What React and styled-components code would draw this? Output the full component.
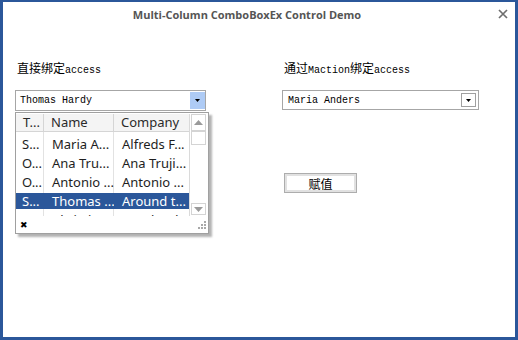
import styled, { createGlobalStyle } from "styled-components";

const GlobalStyle = createGlobalStyle`
  html, body {
    margin: 0;
    padding: 0;
    background: #ffffff;
  }
  * {
    box-sizing: border-box;
  }
`;

const rows = [
  { title: "S...", name: "Maria A...", company: "Alfreds F..." },
  { title: "O...", name: "Ana Tru...", company: "Ana Truji..." },
  { title: "O...", name: "Antonio ...", company: "Antonio ..." },
  { title: "S...", name: "Thomas ...", company: "Around t...", selected: true },
  { title: "S...", name: "Christina ...", company: "Berglunds ..." },
];

function Arrow() {
  return (
    <svg width="5" height="3" viewBox="0 0 5 3">
      <path d="M0 0h5L2.5 3z" fill="#000" />
    </svg>
  );
}

function ScrollArrow({ up }) {
  return (
    <svg width="9" height="5" viewBox="0 0 9 5">
      <path d={up ? "M0 5h9L4.5 0z" : "M0 0h9L4.5 5z"} fill="#9a9a9a" />
    </svg>
  );
}

function Grip() {
  return (
    <svg width="8" height="8" viewBox="0 0 8 8">
      <g fill="#a8a8a8">
        <rect x="6" y="0" width="2" height="2" />
        <rect x="3" y="3" width="2" height="2" />
        <rect x="6" y="3" width="2" height="2" />
        <rect x="0" y="6" width="2" height="2" />
        <rect x="3" y="6" width="2" height="2" />
        <rect x="6" y="6" width="2" height="2" />
      </g>
    </svg>
  );
}

export default function App() {
  return (
    <>
      <GlobalStyle />
      <Window>
        <TitleBar>
          <Title>Multi-Column ComboBoxEx Control Demo</Title>
          <CloseButton>
            <svg width="10" height="10" viewBox="0 0 10 10">
              <path d="M1 1L9 9M9 1L1 9" stroke="#6e6e6e" strokeWidth="1.7" />
            </svg>
          </CloseButton>
        </TitleBar>
        <Content>
          <Column $width={191}>
            <Label>
              <Cjk>直接绑定</Cjk>access
            </Label>
            <ComboWrap>
              <Combo>
                <ComboText>Thomas Hardy</ComboText>
                <DropButton $active>
                  <Arrow />
                </DropButton>
              </Combo>
              <Popup>
                <GridArea>
                  <Table>
                    <HeaderRow>
                      <HeaderCell>T...</HeaderCell>
                      <HeaderCell>Name</HeaderCell>
                      <HeaderCell>Company</HeaderCell>
                    </HeaderRow>
                    <Body>
                      {rows.map((r, i) => (
                        <Row key={i} $selected={r.selected}>
                          <Cell $first>{r.title}</Cell>
                          <Cell>{r.name}</Cell>
                          <Cell>{r.company}</Cell>
                        </Row>
                      ))}
                    </Body>
                  </Table>
                  <ScrollBar>
                    <ScrollBox $h={17}>
                      <ScrollArrow up />
                    </ScrollBox>
                    <ScrollBox $h={14} />
                    <Track />
                    <ScrollBox $h={12}>
                      <ScrollArrow />
                    </ScrollBox>
                  </ScrollBar>
                </GridArea>
                <Footer>
                  <ClearMark>✖</ClearMark>
                  <Grip />
                </Footer>
              </Popup>
            </ComboWrap>
          </Column>
          <Column $width={197}>
            <Label>
              <Cjk>通过</Cjk>Maction<Cjk>绑定</Cjk>access
            </Label>
            <Combo $short>
              <ComboText>Maria Anders</ComboText>
              <DropButton>
                <Arrow />
              </DropButton>
            </Combo>
            <AssignButton>赋值</AssignButton>
          </Column>
        </Content>
      </Window>
    </>
  );
}

const Window = styled.div`
  width: 518px;
  height: 340px;
  background: #ffffff;
  border: 3px solid #2b579a;
  border-top-width: 2px;
  display: flex;
  flex-direction: column;
`;

const TitleBar = styled.div`
  height: 24px;
  display: flex;
  align-items: center;
`;

const Title = styled.div`
  flex: 1;
  text-align: center;
  font-family: "Open Sans", "Liberation Sans", sans-serif;
  font-weight: 700;
  font-size: 11px;
  color: #555555;
`;

const CloseButton = styled.div`
  width: 24px;
  display: flex;
  justify-content: center;
  align-items: center;
`;

const Content = styled.div`
  display: flex;
  gap: 76px;
  padding: 36px 0 0 12px;
`;

const Column = styled.div`
  width: ${(p) => p.$width}px;
  display: flex;
  flex-direction: column;
`;

const Label = styled.div`
  height: 12px;
  line-height: 12px;
  padding-left: 2px;
  margin-bottom: 16px;
  font-family: "Liberation Mono", monospace;
  font-size: 10px;
  color: #000;
  white-space: nowrap;
`;

const Cjk = styled.span`
  font-family: "Noto Sans CJK SC", sans-serif;
  font-size: 12px;
`;

const ComboWrap = styled.div`
  position: relative;
`;

const Combo = styled.div`
  height: ${(p) => (p.$short ? 20 : 21)}px;
  border: 1px solid #a6a6a6;
  display: flex;
  align-items: stretch;
  padding: ${(p) => (p.$short ? "2px" : "1px 0 1px 1px")};
  background: #fff;
`;

const ComboText = styled.div`
  flex: 1;
  padding-left: 3px;
  display: flex;
  align-items: center;
  font-family: "Liberation Mono", monospace;
  font-size: 10px;
  color: #000;
`;

const DropButton = styled.div`
  width: 15px;
  display: flex;
  align-items: center;
  justify-content: center;
  background: ${(p) => (p.$active ? "#aecbf5" : "#ffffff")};
  border: ${(p) => (p.$active ? "none" : "1px solid #a0a0a0")};
`;

const Popup = styled.div`
  position: absolute;
  left: 0;
  top: 22px;
  width: 194px;
  height: 122px;
  background: #fff;
  border: 1px solid #a0a0a0;
  box-shadow: 3px 3px 2px rgba(0, 0, 0, 0.3);
  display: flex;
  flex-direction: column;
  z-index: 2;
`;

const GridArea = styled.div`
  flex: 1;
  display: flex;
  padding-top: 1px;
  overflow: hidden;
`;

const Table = styled.div`
  width: 174px;
  display: flex;
  flex-direction: column;
  border-right: 1px solid #dadada;
`;

const HeaderRow = styled.div`
  height: 18px;
  display: grid;
  grid-template-columns: 28px 70px 75px;
  background: #f4f4f4;
  border-bottom: 1px solid #d5d5d5;
`;

const HeaderCell = styled.div`
  border-right: 1px solid #d5d5d5;
  padding-left: 7px;
  font-family: "Noto Sans", sans-serif;
  font-size: 13px;
  line-height: 17px;
  color: #2a2a2a;
  white-space: nowrap;
  &:last-child {
    border-right: none;
  }
`;

const Body = styled.div`
  flex: 1;
  overflow: hidden;
  padding-top: 4px;
  display: flex;
  flex-direction: column;
  gap: 3px;
  background-image: linear-gradient(#e2e2e2, #e2e2e2),
    linear-gradient(#e2e2e2, #e2e2e2);
  background-size: 1px 100%;
  background-position: 27px 0, 97px 0;
  background-repeat: no-repeat;
`;

const Row = styled.div`
  flex: none;
  height: 16px;
  display: grid;
  grid-template-columns: 28px 70px 75px;
  background: ${(p) => (p.$selected ? "#2b579a" : "transparent")};
  color: ${(p) => (p.$selected ? "#ffffff" : "#1e1e1e")};
`;

const Cell = styled.div`
  padding-left: ${(p) => (p.$first ? 6 : 8)}px;
  font-family: "Noto Sans", sans-serif;
  font-size: 13px;
  line-height: 16px;
  white-space: nowrap;
  overflow: hidden;
`;

const ScrollBar = styled.div`
  width: 17px;
  display: flex;
  flex-direction: column;
  padding: 0 1px 1px;
`;

const ScrollBox = styled.div`
  height: ${(p) => p.$h}px;
  border: 1px solid #d4d4d4;
  background: #fff;
  display: flex;
  align-items: center;
  justify-content: center;
`;

const Track = styled.div`
  flex: 1;
`;

const Footer = styled.div`
  height: 17px;
  display: flex;
  align-items: center;
  justify-content: space-between;
  padding: 0 2px 0 4px;
`;

const ClearMark = styled.span`
  font-family: "DejaVu Sans", sans-serif;
  font-size: 9px;
  font-weight: bold;
  color: #000;
`;

const AssignButton = styled.div`
  margin: 63px 0 0 2px;
  width: 73px;
  height: 20px;
  border: 1px solid #adadad;
  box-shadow: inset 0 0 0 2px #e1e1e1;
  background: #fff;
  display: flex;
  align-items: center;
  justify-content: center;
  font-family: "Noto Sans CJK SC", sans-serif;
  font-size: 12px;
  color: #000;
`;
